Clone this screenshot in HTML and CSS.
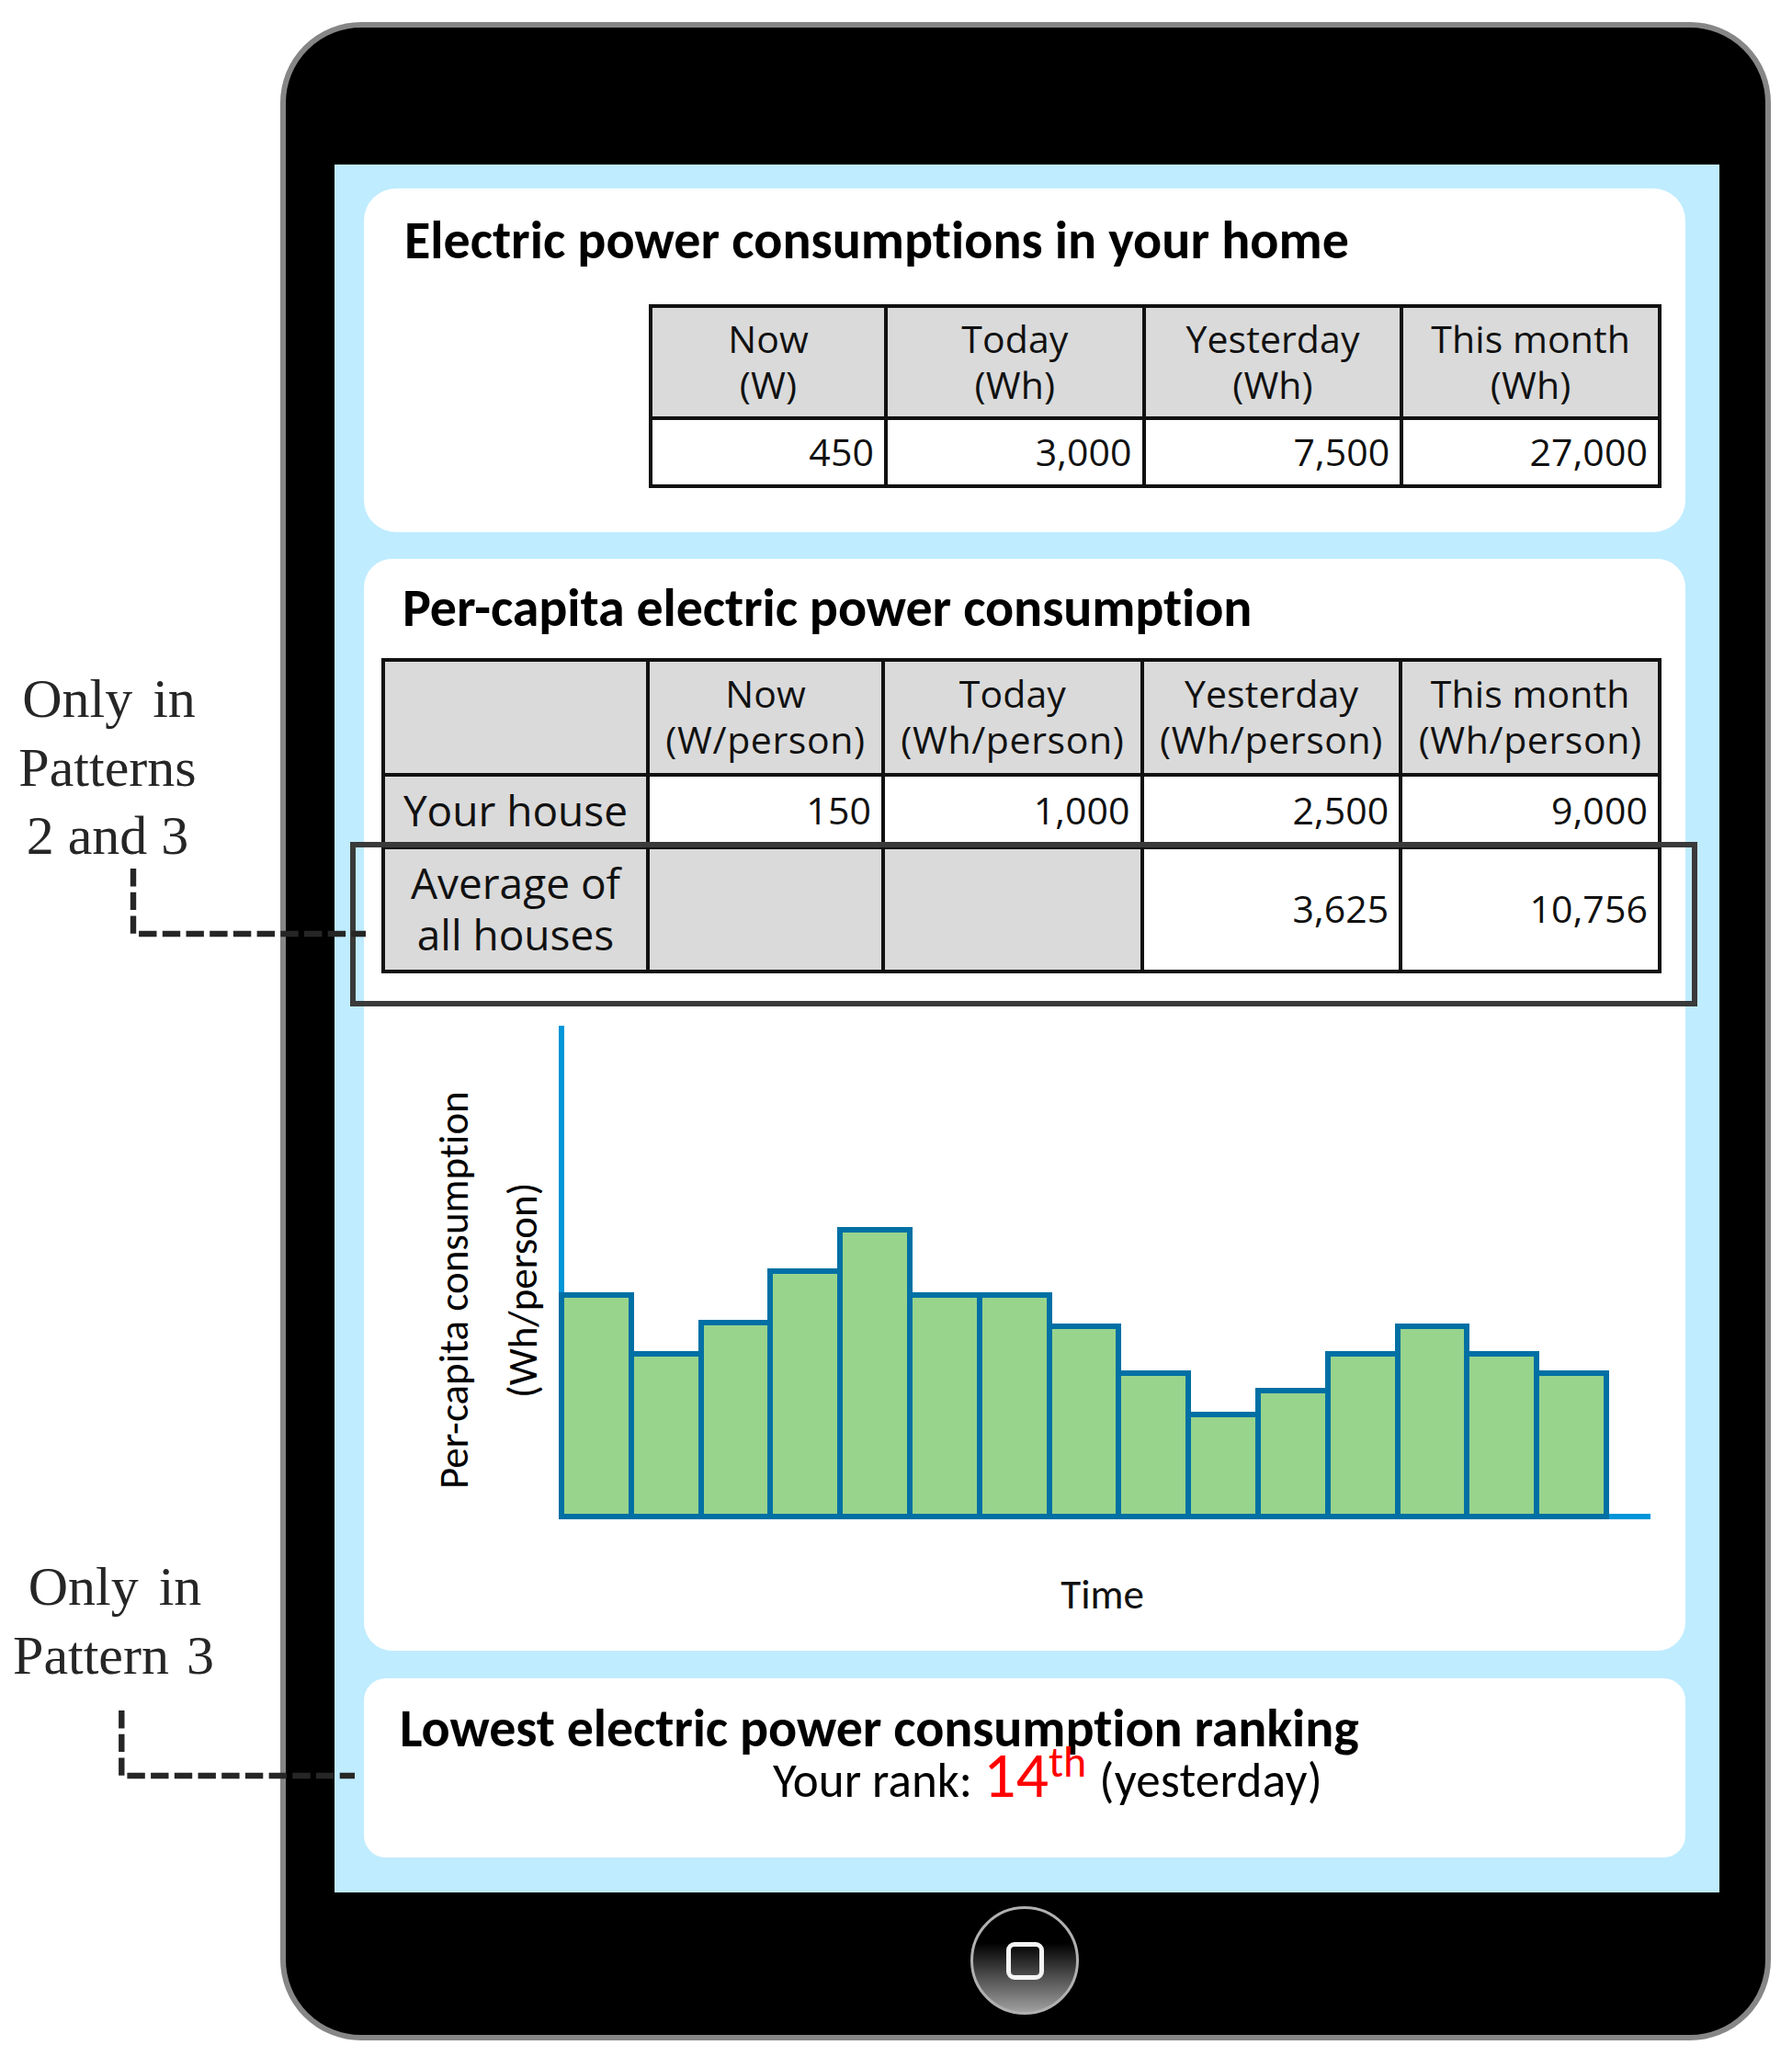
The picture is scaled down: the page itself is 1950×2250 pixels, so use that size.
FILE: index.html
```html
<!DOCTYPE html>
<html lang="en">
<head>
	<meta charset="UTF-8">
	<meta name="viewport" content="width=device-width, initial-scale=1.0">
	<title>Electric power consumption</title>
	<link rel="stylesheet" href="styles.css">
</head>
<body>
	<div class="container">
		<!-- notes on the left -->
		<div class="notes">
			<p class="note note_a"><span class="only">Only in</span><br>Patterns<br>2 and 3</p>
			<p class="note note_b"><span class="only">Only in</span><br>Pattern 3</p>
		</div>
		<!-- tablet -->
		<div class="tablet">
			<div class="screen">
				<div class="card card_home">
					<h2 class="title">Electric power consumptions in your home</h2>
					<table class="data">
						<colgroup>
							<col class="col_now"><col><col><col>
						</colgroup>
						<tr class="head">
							<th>Now<br>(W)</th>
							<th>Today<br>(Wh)</th>
							<th>Yesterday<br>(Wh)</th>
							<th>This month<br>(Wh)</th>
						</tr>
						<tr class="row">
							<td>450</td>
							<td>3,000</td>
							<td>7,500</td>
							<td>27,000</td>
						</tr>
					</table>
				</div>
				<div class="card card_capita">
					<h2 class="title">Per-capita electric power consumption</h2>
					<table class="data">
						<colgroup>
							<col class="col_name"><col class="col_now"><col><col><col>
						</colgroup>
						<tr class="head">
							<th></th>
							<th>Now<br><span class="unit">(W/person)</span></th>
							<th>Today<br><span class="unit">(Wh/person)</span></th>
							<th>Yesterday<br><span class="unit">(Wh/person)</span></th>
							<th>This month<br><span class="unit">(Wh/person)</span></th>
						</tr>
						<tr class="row">
							<th class="name">Your house</th>
							<td>150</td>
							<td>1,000</td>
							<td>2,500</td>
							<td>9,000</td>
						</tr>
						<tr class="row_avg">
							<th class="name">Average of<br>all houses</th>
							<td class="empty"></td>
							<td class="empty"></td>
							<td>3,625</td>
							<td>10,756</td>
						</tr>
					</table>
					<div class="frame"></div>
					<!-- chart -->
					<div class="chart">
						<div class="y_label">Per-capita consumption<br>(Wh/person)</div>
						<div class="plot">
							<div class="bars">
								<div class="bar" style="height: 247px"></div>
								<div class="bar" style="height: 183px"></div>
								<div class="bar" style="height: 217px"></div>
								<div class="bar" style="height: 273px"></div>
								<div class="bar" style="height: 318px"></div>
								<div class="bar" style="height: 247px"></div>
								<div class="bar" style="height: 247px"></div>
								<div class="bar" style="height: 213px"></div>
								<div class="bar" style="height: 162px"></div>
								<div class="bar" style="height: 117px"></div>
								<div class="bar" style="height: 143px"></div>
								<div class="bar" style="height: 183px"></div>
								<div class="bar" style="height: 213px"></div>
								<div class="bar" style="height: 183px"></div>
								<div class="bar" style="height: 162px"></div>
							</div>
						</div>
					</div>
					<div class="x_label">Time</div>
				</div>
				<div class="card card_rank">
					<h2 class="title">Lowest electric power consumption ranking</h2>
					<p class="rank">Your rank: <span class="num">14<sup>th</sup></span> <span class="day">(yesterday)</span></p>
				</div>
			</div>
			<div class="button"></div>
		</div>
		<!-- dashed lines from the notes to the screen -->
		<svg class="lines" width="420" height="2250">
			<path d="M145 945V1016H398"/>
			<path d="M132.3 1861V1932H386"/>
		</svg>
	</div>
</body>
</html>
```
FILE: styles.css
```css
* {
	padding: 0;
	margin: 0;
	box-sizing: border-box;
}
body {
	background-color: #fff;
}
.container {
	width: 1950px;
	height: 2250px;
	display: flex;
	align-items: flex-start;
	position: relative;
	overflow: hidden;
}

/* notes */
.notes {
	width: 305px;
	padding-top: 723px;
}
.note {
	font-family: "Liberation Serif", serif;
	font-size: 60px;
	line-height: 74.7px;
	color: #262626;
	text-align: center;
	white-space: nowrap;
}
.note_a {
	width: 234px;
}
.note_b {
	width: 247px;
	margin-top: 742px;
	word-spacing: 4px;
}
.only {
	margin-left: 3px;
	word-spacing: 7px;
}
.lines {
	position: absolute;
	top: 0;
	left: 0;
	fill: none;
	stroke: #262626;
	stroke-width: 6.4;
	stroke-dasharray: 19.4 6.3;
}

/* tablet body */
.tablet {
	width: 1622px;
	height: 2196px;
	margin-top: 24px;
	padding: 149px 50px 0 53px;
	border: 6px solid #868686;
	border-radius: 88px;
	background-color: #000;
}
.screen {
	height: 1880px;
	padding: 26px 37px 0 32px;
	background-color: #bfecff;
}
.button {
	width: 118px;
	height: 118px;
	margin: 15px 0 0 692px;
	border: 3px solid #b0b0b0;
	border-radius: 50%;
	background: linear-gradient(#000 33%, #a0a0a0);
	display: flex;
	align-items: center;
	justify-content: center;
}
.button::before {
	content: "";
	width: 31px;
	height: 31px;
	border: 5px solid #f4f4f4;
	border-radius: 9px;
}

/* cards */
.card {
	font-family: Carlito, Calibri, "Open Sans", sans-serif;
	font-variant-ligatures: none;
	background-color: #fff;
	position: relative;
}
.card_home {
	height: 374px;
	padding-top: 27px;
	border-radius: 35px;
}
.card_capita {
	height: 1188px;
	margin-top: 29px;
	padding-top: 24px;
	border-radius: 31px;
}
.card_rank {
	height: 195px;
	margin-top: 30px;
	padding-top: 25px;
	border-radius: 24px;
}
.title {
	font-size: 58px;
	line-height: 60px;
	white-space: nowrap;
}
.card_home .title {
	margin-left: 44px;
}
.card_capita .title {
	margin-left: 42px;
	letter-spacing: -0.1px;
}
.card_rank .title {
	margin-left: 39px;
	letter-spacing: -0.1px;
}

/* tables */
.data {
	border-collapse: collapse;
	table-layout: fixed;
	font-family: "Open Sans", "Noto Sans", sans-serif;
	font-size: 41px;
	line-height: 50px;
	letter-spacing: 0.1px;
	color: #111;
}
.card_home .data {
	width: 1102px;
	margin: 39px 0 0 310px;
}
.card_capita .data {
	width: 1393px;
	margin: 24px 0 0 19px;
}
.col_now {
	width: 256px;
}
.col_name {
	width: 288px;
}
.data th,
.data td {
	border: 4px solid #111;
	padding-bottom: 3px;
	white-space: nowrap;
}
.data th {
	font-weight: 400;
	background-color: #dadada;
}
.data td {
	padding-right: 11px;
	text-align: right;
}
.data .unit {
	letter-spacing: 0.6px;
}
.data .name {
	font-size: 46px;
	line-height: 56px;
	letter-spacing: 0;
}
.data .empty {
	background-color: #dadada;
}
.card_home .head {
	height: 122px;
}
.card_home .row {
	height: 74px;
}
.card_capita .head {
	height: 125px;
}
.card_capita .row {
	height: 79px;
}
.row_avg {
	height: 135px;
}
/* frame round the average row */
.frame {
	width: 1466px;
	height: 179px;
	border: 6px solid #3a3a3a;
	position: absolute;
	top: 308px;
	left: -15px;
}

/* chart */
.chart {
	display: flex;
	margin: 57px 0 0 61px;
}
.y_label {
	width: 149px;
	height: 575px;
	margin-right: 2px;
	writing-mode: vertical-rl;
	transform: rotate(180deg);
	font-size: 45px;
	line-height: 74.5px;
	text-align: center;
	white-space: nowrap;
}
.plot {
	width: 1188px;
	height: 537px;
	border-left: 6px solid #0096d9;
	border-bottom: 6px solid #0096d9;
	display: flex;
	align-items: flex-end;
}
.bars {
	width: 1143px;
	margin: 0 0 -6px -6px;
	display: flex;
	align-items: flex-end;
}
.bar {
	flex: 1 0 81.8px;
	border: 6px solid #0070a4;
	background-color: #98d48c;
}
.bar + .bar {
	margin-left: -6px;
}
.x_label {
	margin-top: 17px;
	padding-left: 169px;
	font-size: 45px;
	line-height: 54px;
	text-align: center;
	color: #111;
}

/* ranking */
.rank {
	margin: -10px 0 0 445px;
	font-size: 53px;
	line-height: 60px;
	white-space: nowrap;
}
.num {
	font-size: 70px;
	color: #f00;
}
.num sup {
	font-size: 48px;
	line-height: 0;
	vertical-align: 22px;
}
.day {
	margin-left: 2px;
	letter-spacing: 0.3px;
}
```
